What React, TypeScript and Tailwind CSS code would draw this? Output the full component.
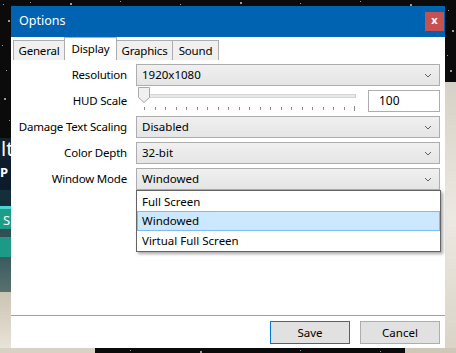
import React from 'react';

const font = { fontFamily: '"Noto Sans", "Open Sans", sans-serif' };

const Chevron = () => (
  <svg width="8" height="5" viewBox="0 0 8 5" className="shrink-0">
    <path d="M1 1 L4 4 L7 1" fill="none" stroke="#606060" strokeWidth="1" />
  </svg>
);

const Select = ({ value, children }: { value: string; children?: React.ReactNode }) => (
  <div className="relative h-[22px] w-[304px]">
    <div className="flex h-full items-center justify-between border border-[#adadad] bg-gradient-to-b from-[#f0f0f0] to-[#e5e5e5] pl-[5px] pr-[7px] text-[11.5px] text-black">
      <span>{value}</span>
      <Chevron />
    </div>
    {children}
  </div>
);

const Slider = () => {
  const ticks = Array.from({ length: 21 }, (_, i) => i);
  return (
    <div className="relative h-[22px] w-[220px]">
      {/* track */}
      <div className="absolute left-[8px] top-[4px] h-[4px] w-[212px] border border-[#d6d6d6] bg-[#e7eaea]" />
      {/* thumb */}
      <svg className="absolute left-[2px] top-[-3px]" width="12" height="16" viewBox="0 0 12 16">
        <path d="M0.5 0.5 H11.5 V10.5 L6 15.5 L0.5 10.5 Z" fill="#f0f0f0" stroke="#a8a8a8" />
      </svg>
      {/* ticks */}
      {ticks.map(i => (
        <div
          key={i}
          className="absolute w-px bg-[#8a8a8a]"
          style={{ left: 8 + i * 10.5, top: i === 20 ? 16 : 17, height: i === 20 ? 5 : 3 }}
        />
      ))}
    </div>
  );
};

const Row = ({ label, children }: { label: string; children: React.ReactNode }) => (
  <div className="flex h-[22px] items-center">
    <div className="w-[117px] whitespace-nowrap pr-[1px] text-right text-[11.5px] tracking-[-0.2px] text-black">{label}</div>
    <div className="ml-[8px] flex items-center">{children}</div>
  </div>
);

const Star = ({ x, y, s = 1 }: { x: number; y: number; s?: number }) => (
  <div className="absolute rounded-full bg-white/80" style={{ left: x, top: y, width: s, height: s }} />
);

export default function App() {
  const stars: [number, number, number][] = [
    [3, 4, 1], [8, 20, 2], [2, 45, 1], [6, 70, 1], [4, 98, 2], [9, 120, 1], [30, 2, 1], [70, 3, 2],
    [120, 1, 1], [180, 4, 1], [240, 2, 2], [300, 3, 1], [360, 1, 1], [410, 4, 2], [448, 10, 1],
    [452, 30, 2], [447, 55, 1], [450, 70, 2], [130, 350, 1], [200, 351, 2], [300, 350, 1], [380, 351, 1],
  ];
  return (
    <div className="relative h-[353px] w-[456px] overflow-hidden bg-[#0b0b0b]" style={font}>
      {/* desktop background */}
      {stars.map(([x, y, s], i) => <Star key={i} x={x} y={y} s={s} />)}
      <div className="absolute left-0 top-[138px] h-[22px] w-[11px] bg-[#12222c] pl-[1px] text-[20px] leading-[22px] text-white">lt</div>
      <div className="absolute left-0 top-[160px] h-[30px] w-[11px] bg-[#0c1c2c] pt-[4px] text-[13px] font-bold leading-[16px] text-white">P</div>
      <div className="absolute left-0 top-[190px] h-[16px] w-[11px] bg-[#13303a]" />
      <div className="absolute left-0 top-[206px] h-[3px] w-[11px] bg-[#48d6d0]" />
      <div className="absolute left-0 top-[209px] h-[20px] w-[11px] bg-[#1d9c86] pl-[3px] text-[13px] leading-[22px] text-white">S</div>
      <div className="absolute left-0 top-[229px] h-[8px] w-[11px] bg-[#2f4f55]" />
      <div className="absolute left-0 top-[237px] h-[20px] w-[11px] bg-[#1b9a85]" />
      <div className="absolute left-0 top-[257px] h-[35px] w-[11px] bg-gradient-to-b from-[#3b5a5e] to-[#58716f]" />
      <div className="absolute left-0 top-[292px] h-[61px] w-[11px] bg-gradient-to-b from-[#cbc3b4] to-[#ebe6dc]" />
      <div className="absolute left-[445px] top-[82px] h-[271px] w-[11px] bg-gradient-to-b from-[#d6d1c6] via-[#ece9e2] to-[#d9d3c6]" />
      <div className="absolute left-0 top-[348px] h-[5px] w-[95px] bg-[#d8d1c4]" />
      <div className="absolute left-[405px] top-[348px] h-[5px] w-[51px] bg-[#cfc7b8]" />

      {/* dialog window */}
      <div className="absolute left-[11px] top-[6px] flex h-[342px] w-[434px] flex-col bg-white">
        {/* title bar */}
        <div className="flex h-[31px] items-center justify-between bg-[#0063b1] pl-[8px] pr-[1px]">
          <span className="text-[12.5px] text-white">Options</span>
          <div className="flex h-[19px] w-[19px] items-center justify-center bg-[#c75050] pb-[2px] text-[11px] font-bold text-white">x</div>
        </div>

        {/* tabs */}
        <div className="flex h-[23px] items-end pl-[2px] text-[11.5px] tracking-[-0.2px]">
          <div className="flex h-[20px] w-[51px] items-center justify-center border border-r-0 border-b-0 border-[#adadad] bg-[#f0f0f0]">General</div>
          <div className="flex h-[23px] w-[53px] items-center justify-center border border-b-0 border-[#adadad] bg-white">Display</div>
          <div className="flex h-[20px] w-[56px] items-center justify-center border border-l-0 border-b-0 border-[#adadad] bg-[#f0f0f0]">Graphics</div>
          <div className="flex h-[20px] w-[46px] items-center justify-center border border-l-0 border-b-0 border-[#adadad] bg-[#f0f0f0]">Sound</div>
        </div>

        {/* panel */}
        <div className="flex flex-1 flex-col gap-[4px] pt-[4px]">
          <Row label="Resolution"><Select value="1920x1080" /></Row>
          <Row label="HUD Scale">
            <div className="flex items-center">
              <Slider />
              <div className="ml-[12px] flex h-[22px] w-[72px] items-center border border-[#adadad] bg-white pl-[10px] text-[12px]">100</div>
            </div>
          </Row>
          <Row label="Damage Text Scaling"><Select value="Disabled" /></Row>
          <Row label="Color Depth"><Select value="32-bit" /></Row>
          <Row label="Window Mode">
            <Select value="Windowed">
              <div className="absolute left-0 top-[22px] z-10 flex h-[62px] w-[305px] flex-col border border-[#646464] bg-white py-[1px] text-[11.5px] shadow-[2px_2px_3px_rgba(0,0,0,0.35)]">
                <div className="flex h-[20px] items-center pl-[5px]">Full Screen</div>
                <div className="flex h-[20px] items-center border border-[#7ebcef] bg-[#cce8ff] pl-[4px]">Windowed</div>
                <div className="flex h-[20px] items-center pl-[5px]">Virtual Full Screen</div>
              </div>
            </Select>
          </Row>
        </div>

        {/* footer */}
        <div className="flex h-[33px] items-start justify-end gap-[10px] border-t border-[#a0a0a0] pr-[5px] pt-[5px] text-[11.5px]">
          <div className="flex h-[23px] w-[80px] items-center justify-center border border-[#0078d7] bg-[#e1e1e1]">Save</div>
          <div className="flex h-[23px] w-[80px] items-center justify-center border border-[#adadad] bg-[#e1e1e1]">Cancel</div>
        </div>
      </div>
    </div>
  );
}
